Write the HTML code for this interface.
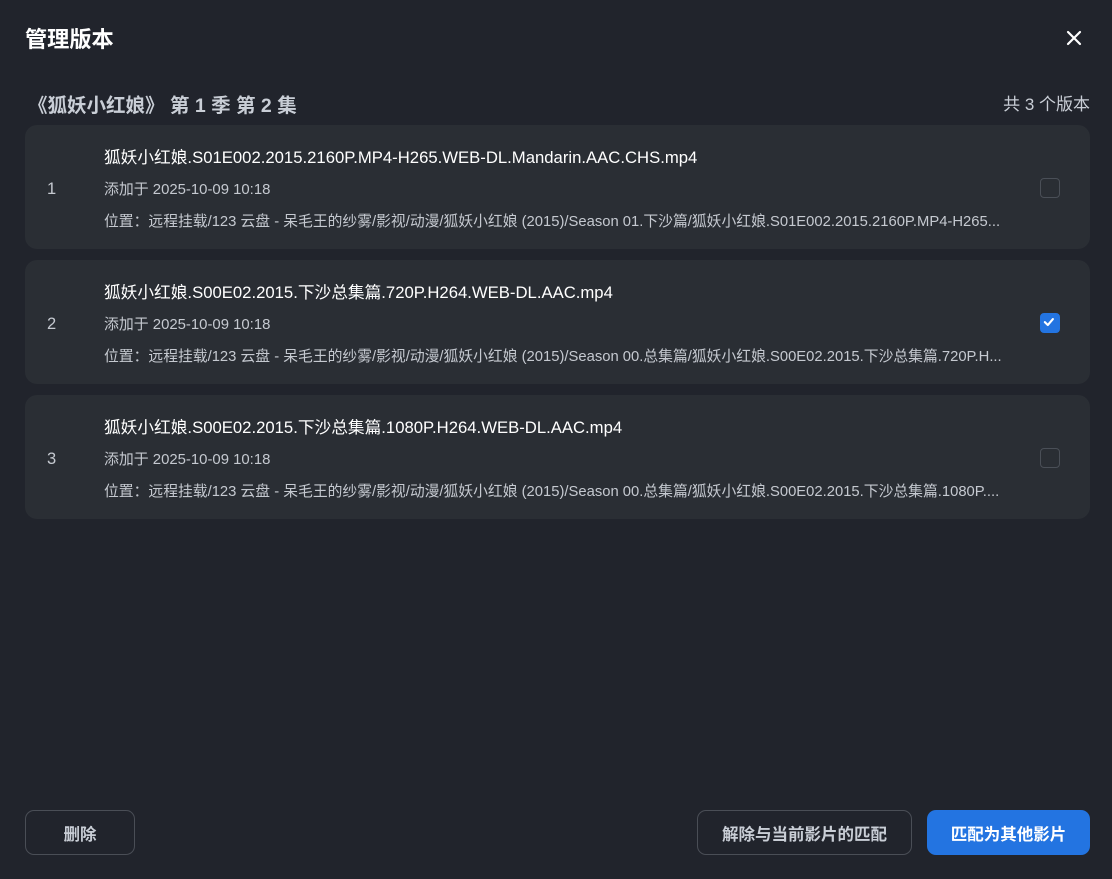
<!DOCTYPE html>
<html><head><meta charset="utf-8"><style>
*{box-sizing:border-box;margin:0;padding:0}
body{width:1112px;height:879px;background:#21242c;font-family:"Liberation Sans","Noto Sans CJK SC",sans-serif;color:#e6e8ec;position:relative;overflow:hidden}
.title{position:absolute;left:25px;top:22px;font-size:22.2px;font-weight:bold;color:#fff}
.close{position:absolute;left:1064px;top:28px;width:20px;height:20px}
.sub{position:absolute;left:28px;top:89px;font-size:19.5px;font-weight:bold;color:#c9ced6}
.count{position:absolute;right:22px;top:90px;font-size:17px;color:#c9ced6}
.card{position:absolute;left:25px;width:1065px;height:124px;background:#2a2e34;border-radius:12px}
.num{position:absolute;left:22px;top:55px;font-size:16.5px;color:#c5c9d0}
.name{position:absolute;left:79px;top:19px;font-size:16.7px;color:#fff}
.date{position:absolute;left:79px;top:53px;font-size:14.9px;color:#c5c9d0}
.loc{position:absolute;left:79px;top:85px;font-size:14.8px;color:#c5c9d0;white-space:nowrap}
.cb{position:absolute;left:1015px;top:53px;width:20px;height:20px;border:1.5px solid #4a4f57;border-radius:4px}
.cb.on{background:#2374e1;border-color:#2374e1}
.btn{position:absolute;top:810px;height:45px;border-radius:9px;font-size:16.5px;font-weight:bold;display:flex;align-items:center;justify-content:center}
.o{border:1px solid #4a4e56;color:#c9ced6}
</style></head><body>
<div class="title">管理版本</div>
<svg class="close" viewBox="0 0 20 20"><path d="M4 4L16 16M16 4L4 16" stroke="#fff" stroke-width="2.2" stroke-linecap="round"/></svg>
<div class="sub">《狐妖小红娘》 第 1 季 第 2 集</div>
<div class="count">共 3 个版本</div>

<div class="card" style="top:125px">
<div class="num">1</div>
<div class="name">狐妖小红娘.S01E002.2015.2160P.MP4-H265.WEB-DL.Mandarin.AAC.CHS.mp4</div>
<div class="date">添加于 2025-10-09 10:18</div>
<div class="loc">位置：远程挂载/123 云盘 - 呆毛王的纱雾/影视/动漫/狐妖小红娘 (2015)/Season 01.下沙篇/狐妖小红娘.S01E002.2015.2160P.MP4-H265...</div>
<div class="cb"></div></div>

<div class="card" style="top:260px">
<div class="num">2</div>
<div class="name">狐妖小红娘.S00E02.2015.下沙总集篇.720P.H264.WEB-DL.AAC.mp4</div>
<div class="date">添加于 2025-10-09 10:18</div>
<div class="loc">位置：远程挂载/123 云盘 - 呆毛王的纱雾/影视/动漫/狐妖小红娘 (2015)/Season 00.总集篇/狐妖小红娘.S00E02.2015.下沙总集篇.720P.H...</div>
<div class="cb on"><svg viewBox="0 0 20 20" width="17" height="17" style="position:absolute;left:0;top:0"><path d="M4.5 9.5L8 13L14 6" stroke="#fff" stroke-width="2.5" fill="none" stroke-linecap="round" stroke-linejoin="round"/></svg></div></div>

<div class="card" style="top:395px">
<div class="num">3</div>
<div class="name">狐妖小红娘.S00E02.2015.下沙总集篇.1080P.H264.WEB-DL.AAC.mp4</div>
<div class="date">添加于 2025-10-09 10:18</div>
<div class="loc">位置：远程挂载/123 云盘 - 呆毛王的纱雾/影视/动漫/狐妖小红娘 (2015)/Season 00.总集篇/狐妖小红娘.S00E02.2015.下沙总集篇.1080P....</div>
<div class="cb"></div></div>

<div class="btn o" style="left:25px;width:110px">删除</div>
<div class="btn o" style="left:697px;width:215px">解除与当前影片的匹配</div>
<div class="btn" style="left:927px;width:163px;background:#2374e1;color:#fff">匹配为其他影片</div>
</body></html>
